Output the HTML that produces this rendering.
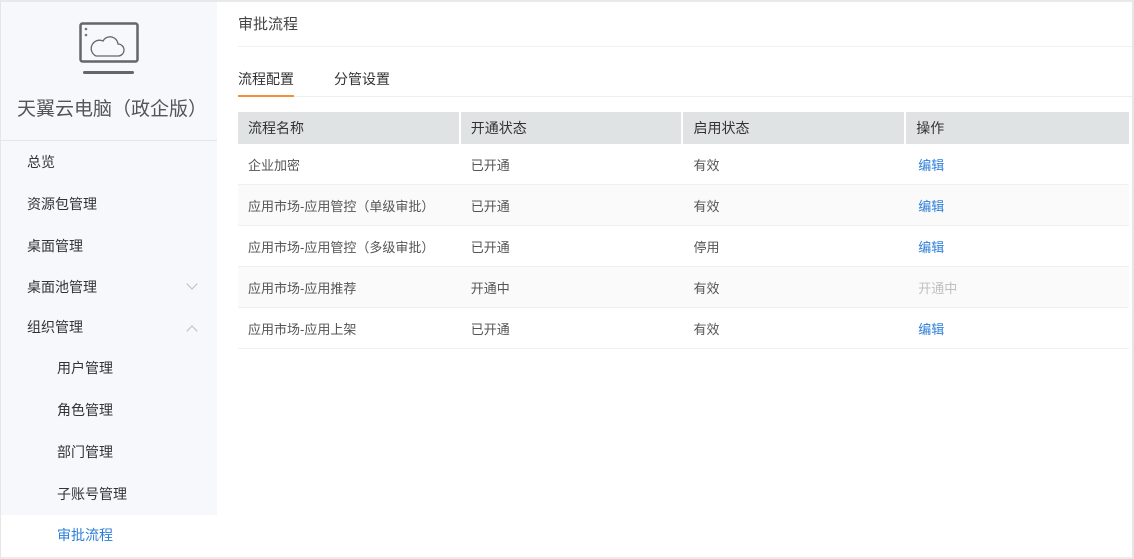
<!DOCTYPE html>
<html><head><meta charset="utf-8"><style>
*{margin:0;padding:0;box-sizing:border-box}
body{width:1134px;height:559px;overflow:hidden;font-family:"Liberation Sans","Noto Sans CJK SC",sans-serif;background:#fff;position:relative;color:#333}
.frame{position:absolute;inset:0;border:1px solid #e6e6e6;border-top:2px solid #e9e9ec;border-right:2px solid #e6e6e6;border-bottom:2px solid #ececec;pointer-events:none}
.side{position:absolute;left:1px;top:2px;width:216px;height:513px;background:#f7f8fc}
.logo{position:absolute;left:78px;top:20px}
.brand{position:absolute;left:16px;top:92px;font-size:19px;color:#555;white-space:nowrap}
.sep{position:absolute;left:0;top:138px;width:216px;height:1px;background:#e6e6ea}
.mi{position:absolute;font-size:14px;color:#333}
.side .mi{margin-left:-2px;margin-top:-2px}
.sub{left:58px}
.chev{position:absolute;left:187px;width:8px;height:8px;border-left:1px solid #bbb;border-bottom:1px solid #bbb}
.t{position:absolute;font-size:14px}
table{position:absolute;left:238px;top:112px;border-collapse:separate;border-spacing:0;width:891px}
th{background:#e0e3e4;height:32px;font-weight:normal;text-align:left;padding-left:10px;font-size:14px;color:#333;border-right:2px solid #fff}
th:last-child{border-right:none}
td{height:41px;padding-left:10px;font-size:13px;color:#555;border-bottom:1px solid #edf0f7;width:223px}
tr.g td{background:#fafafa}
a{color:#2e7fd9;text-decoration:none;font-size:13px;margin-left:2px}
</style></head><body>
<div class="side">
<svg class="logo" width="62" height="54" viewBox="0 0 62 54"><rect x="1.5" y="1.5" width="57" height="38" rx="2" fill="none" stroke="#666" stroke-width="2.5"/><circle cx="7" cy="7" r="1.3" fill="#777"/><circle cx="7" cy="13" r="1.3" fill="#777"/><path d="M17 34 h22 a6 6 0 0 0 0-12 a8 8 0 0 0 -15 -3 a6 6 0 0 0 -7 15z" fill="none" stroke="#666" stroke-width="1.3"/><rect x="4" y="49" width="51" height="3" rx="1.5" fill="#666"/></svg>
<div class="brand">天翼云电脑（政企版）</div>
<div class="sep"></div>
<div class="mi" style="left:28px;top:152px">总览</div>
<div class="mi" style="left:28px;top:194px">资源包管理</div>
<div class="mi" style="left:28px;top:236px">桌面管理</div>
<div class="mi" style="left:28px;top:277px">桌面池管理</div>
<div class="chev" style="top:278px;transform:rotate(-45deg)"></div>
<div class="mi" style="left:28px;top:317px">组织管理</div>
<div class="chev" style="top:325px;transform:rotate(135deg)"></div>
<div class="mi sub" style="top:358px">用户管理</div>
<div class="mi sub" style="top:400px">角色管理</div>
<div class="mi sub" style="top:442px">部门管理</div>
<div class="mi sub" style="top:484px">子账号管理</div>
</div>
<div class="mi sub" style="top:525px;left:57px;color:#2e7fd9">审批流程</div>
<div class="t" style="left:238px;top:13px;font-size:15px;color:#444">审批流程</div>
<div style="position:absolute;left:238px;top:46px;width:894px;height:1px;background:#f0f0f0"></div>
<div class="t" style="left:238px;top:69px;color:#333">流程配置</div>
<div class="t" style="left:334px;top:69px;color:#333">分管设置</div>
<div style="position:absolute;left:238px;top:95px;width:56px;height:2px;background:#f0923a"></div>
<div style="position:absolute;left:294px;top:96px;width:838px;height:1px;background:#eee"></div>
<table>
<tr><th>流程名称</th><th>开通状态</th><th>启用状态</th><th>操作</th></tr>
<tr><td>企业加密</td><td>已开通</td><td>有效</td><td><a>编辑</a></td></tr>
<tr class="g"><td>应用市场-应用管控（单级审批）</td><td>已开通</td><td>有效</td><td><a>编辑</a></td></tr>
<tr><td>应用市场-应用管控（多级审批）</td><td>已开通</td><td>停用</td><td><a>编辑</a></td></tr>
<tr class="g"><td>应用市场-应用推荐</td><td>开通中</td><td>有效</td><td><span style="color:#c0c0c0;font-size:13px;margin-left:2px">开通中</span></td></tr>
<tr><td>应用市场-应用上架</td><td>已开通</td><td>有效</td><td><a>编辑</a></td></tr>
</table>
<div class="frame"></div>
</body></html>
